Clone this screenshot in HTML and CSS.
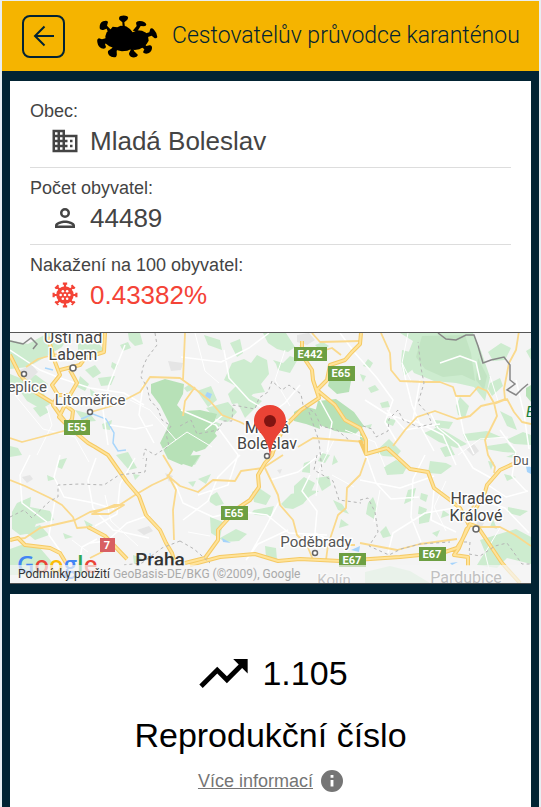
FILE: index.html
```html
<!DOCTYPE html>
<html lang="cs">
<head>
<meta charset="utf-8">
<meta name="viewport" content="width=device-width, initial-scale=1">
<title>Cestovatelův průvodce karanténou</title>
<link rel="stylesheet" href="styles.css">
</head>
<body>
<header class="topbar">
  <button class="back" type="button" aria-label="Zpět">
    <svg viewBox="0 0 24 24" width="24" height="24" fill="none" stroke="currentColor" stroke-width="2"><path d="M22 12H3M12.500 2.500L3 12l9.500 9.500"/></svg>
  </button>
  <svg class="logo" viewBox="12 15 186 135" width="62" height="45" aria-hidden="true">
    <path d="M40 82l4-12 12-9 6-8 14 2 10-5 16 2 12 8 8 10 14-6 14 1 12 6 6 10 2 14-6 10-8 8-14 8-14 2-10-3-12 5-16 2-14-3-12-8-12-4-10-8z"/>
    <path d="M92 55l-1-15-9-8q-3-8 4-11 10-4 20 1 5 4 0 10l-9 8 2 15zM50 75l-6-16-10 4q-10 1-11-5-1-16 10-21 12-5 15 2l-3 11 19 20zM46 86l-16 5q-5-2-9-3-7 2-5 12 2 13 12 18 12 3 14-4l-3-9 18-10zM64 103l-3 14-13 9q-2 7 3 13 9 8 21 5 4-5 2-18l9-20zM110 108l6 15-5 10q0 9 10 12 14 2 17-7l-12-12-3-16zM135 103l22 18-4 9q5 6 16 3 12-6 11-19-2-7-8-5l-9 2-16-18zM152 76l20-6 3-11q5-3 11 3 9 9 10 22-2 5-9 3l-8-7-18 6zM122 65l12-14-2-10q3-6 12-5 15 1 19 10 0 6-7 6l-10-1-10 16z"/>
  </svg>
  <h1 class="title">Cestovatelův průvodce karanténou</h1>
</header>
<main class="page">
  <section class="card place">
    <dl class="facts">
      <div class="fact">
        <dt>Obec:</dt>
        <dd><svg class="fact-icon" viewBox="0 0 24 24" fill="currentColor"><path d="M12 7V3H2v18h20V7H12zM6 19H4v-2h2v2zm0-4H4v-2h2v2zm0-4H4V9h2v2zm0-4H4V5h2v2zm4 12H8v-2h2v2zm0-4H8v-2h2v2zm0-4H8V9h2v2zm0-4H8V5h2v2zm10 12h-8v-2h2v-2h-2v-2h2v-2h-2V9h8v10zm-2-8h-2v2h2v-2zm0 4h-2v2h2v-2z"/></svg>Mladá Boleslav</dd>
      </div>
      <div class="fact">
        <dt>Počet obyvatel:</dt>
        <dd><svg class="fact-icon" viewBox="0 0 24 24" fill="currentColor"><path d="M12 6a2 2 0 110 4 2 2 0 010-4m0 10c2.700 0 5.800 1.300 6 2H6c.2-.7 3.300-2 6-2m0-12a4 4 0 100 8 4 4 0 000-8zm0 10c-2.700 0-8 1.300-8 4v2h16v-2c0-2.700-5.300-4-8-4z"/></svg>44489</dd>
      </div>
      <div class="fact infected">
        <dt>Nakažení na 100 obyvatel:</dt>
        <dd><svg class="fact-icon" viewBox="0 0 24 24">
          <g fill="none" stroke="currentColor" stroke-width="2"><path d="M12 1v22M1 12h22M4.200 4.200l15.600 15.600M19.800 4.200L4.200 19.800M10 1.500h4M10 22.500h4M1.500 10v4M22.500 10v4M3 6l3-3M18 3l3 3M3 18l3 3M18 21l3-3"/></g>
          <circle cx="12" cy="12" r="8" fill="currentColor"/>
          <g fill="#fff"><circle cx="10" cy="8.500" r="1.200"/><circle cx="14" cy="8.500" r="1.200"/><circle cx="8" cy="12" r="1.200"/><circle cx="12" cy="12" r="1.200"/><circle cx="16" cy="12" r="1.200"/><circle cx="10" cy="15.500" r="1.200"/><circle cx="14" cy="15.500" r="1.200"/></g>
        </svg>0.43382%</dd>
      </div>
    </dl>
    <div class="map">
      <svg class="map-canvas" viewBox="10 333 521 250" preserveAspectRatio="xMidYMid slice" role="img" aria-label="Mapa okolí Mladé Boleslavi">
        <rect x="10" y="333" width="521" height="250" fill="#f4f4f4"/>
        <g fill="#cdeccf">
          <path d="M10 340l18 4 20-11h22l-8 14-20 12-14 8-18 2zM10 374l10 4 16-3 12 9-4 10 6 10-9 5-14-8-7-10-10-5zM78 343l18-3 8 10-12 5-14-4zM85 370l10-5 6 8-8 5zM98 378l17-2-4 9-10 1zM80 376l9 8-4 7-8-4zM112 362l6 3-3 6-4-4zM102 424l10-4-2 10-7-1zM90 389l6 4-5 4zM120 345l8-3 3 6-8 3zM128 333h12l3 11-8 2-6-6zM33 408l10-4 6 8-9 5zM10 446l8 2 4 7-12 2zM75 410l15 4 6 7-12 1z"/>
          <path d="M204 335l16 5 2 10-14-5zM230 343l10-4 3 14-6 4zM263 333h23l9 14-7 5-11-3-9-6zM273 360l10 3 7-7 8 3-8 14-12-3-2-6zM232 363l12-4 7 4 6-8 10 5 2 14-8 10 4 8-12 2-7 8-14 2-4-10 8-8-12-6zM197 391l14-5 6 14-9 7zM206 408l22-6 9 10-9 10-12-3zM237 402l13-7 12 6-9 9-8 8zM184 388l6-4 4 5-7 3zM315 345l8-3 6 4-8 5zM211 420l10 4-7 10-7-3z"/>
          <path d="M400 333h73l8 18 9 26-5 24-11-14-18-4-22-2-20-8-8-14 7-18zM402 350l8 2 2 18-8 6-3-12zM488 352l13-9 10 5-6 12-12 1zM490 383l10-5 3 8-11 10-4-7zM363 366l5-7 5 4-3 5zM360 374l6 2-3 6zM368 388l7-3 4 5-8 3zM380 403l8-2 2 6-8 1zM456 406l4-9 9 9-4 12-7-3zM435 420l18 2-4 7-14-2zM424 433l14-6 14 8 15 9-10 4-18-6zM463 434l24-3 14 6-20 3-15 1zM487 446l20-3 10 10-14-1-17-3zM506 440l17-8 8 3v10l-17-1zM500 411l12 6 5 13-10-4zM386 418l10 2-3 6-7-3zM375 452l14-13 12 12-5 6-13-1zM440 448l10-3 5 10-10 2zM364 426l8-2-2 5zM526 351l5-3v12z"/>
          <path d="M17 503l14-6-1 10 20 4 4 9-18 4-4 9-12 2-8-6v-17zM24 531l16-6 9 10-14 5zM10 549l14-5 16 4 12 14-12 13H10zM59 460l8-2-5 11-5-2zM47 475l9 4-8 2zM116 455l12-3 9 16-8 2zM84 520l9 5-5 5zM133 474l7 1-5 5zM63 533l10 4-8 2zM133 555l9 3-8 6z"/>
          <path d="M181 455h20l-6 10-14-4zM209 497l8-5 7 12-8 2-6-4zM252 492l7-4 12 8-5 9-12-3zM254 510l20-4-3 10-15-1-5-2zM210 517l13 5-3 16 16-9 11 5-8 7-14 1-14-9zM198 479l13-5-5 10zM188 482l8-1-3 6zM265 546l11 2 1 12-11-3zM281 504l10-10 16-4 12 1-10 6-6 7-10 5-8-1zM294 486l10-9 11 6-5 11-16 1zM304 463l6-2v12l-8-1zM322 453l8 2-5 8-7-2zM316 478l13-2 2 9-9 6zM333 500l9 4 7 10-11-4zM341 519l8 6-10 3zM334 455l4 7-6 3z"/>
          <path d="M384 467l12-7 12 5-5 9-16 1zM430 461l16 2 6 3-11 8-13-1zM408 490l8-2-3 12-9 4zM421 493l7 2-2 7-6-3zM419 506l8 3-2 6-7-1zM419 516l12-4-2 10-10 2zM368 503l5-6 4 10-3 12-8-5zM380 532l6-6 5 10-8 2zM443 510l7 5-9 3zM432 533l8-3-3 7zM480 540l16-5 20-6 15 8v27l-24-6-10 10-20-3 8-13zM508 507l20 4-8 5-12-3zM493 519l4 10-7-2zM488 461l6 1-3 8zM506 457l10-4 5 5zM504 474l12 3-9 4zM365 572l25-6 20 5 20 12h-65z"/>
        </g>
        <g fill="#b7e1b7">
          <path d="M151 384l14-5 19 5-1 10-6 11 7 8 17 4 10-2 6 15-7 10-12 3-7 12-9 10-14-6-8-16 6-12 3-8-9-18-9-12zM184 411l16-1 17 4-5 15 5 7-12 13-9 3-12-8zM294 412l10-6 14 4 2 19-14-5-12-3zM318 401l18-2 18 13 10 14-9 8-20-3-15-6-5-12zM330 377l9-3 12 7-2 11-12 2-9-8zM360 433l5 2-1 7-4-3zM526 388l5-3v17l-5-6zM183 457l17-2-8 12-9-3z"/>
        </g>
        <g fill="#c2e4c3"><path d="M422 336l43-1 6 18 4 28-13-6-19 2-18-8-9-12zM478 358l9 18-3 14-8-10z"/></g>
        <g fill="#e5e5e5"><path d="M20 370l12-5 6 7-8 8-10-2zM297 335l12-2 6 7-8 5-10-3zM165 473l8 3-4 6zM22 477l8-2 3 4-6 4zM137 530l12-4 4 5-9 4zM466 449l8-5 5 7-6 5zM168 361l15 2-2 7-10 1zM476 520l8 3-5 9zM277 470l5-1-2 5z"/></g>
        <g fill="#a5d3fb"><path d="M207 392l5 2-2 5-5-3zM222 538l9 5-8-1zM526 466l5 1v7l-4-2zM351 550l9-4-1 6zM450 563l8-1-6 3z"/></g>
        <g fill="none" stroke="#a9d6fb" stroke-width="1.500"><path d="M45 368l8 2M81 419l12-5 13 5 8 14-1 10 5 8 8-1M150 553l1 8"/></g>
        <g fill="none" stroke="#fff" stroke-width="1.500" stroke-linejoin="round">
          <path d="M10 350l30 20 20 8 30 10 34 5 20 12M125 345l-16 40-6 25 5 35M110 425l25 4 18-4M143 385l-4 30 15 28M181 357l40 5 28-14 20-15M224 350l5 28 20 22 20 12M181 410l35 15 22 30-10 30-30 10M205 430l18-15M300 385l-15 18-25 18M320 400l12 22-5 30M340 333l15 20 22 25 16 22-8 22 12 20M365 400l22 14 28 9M402 363l4 18 6 24 10 24 12 22M440 363l20-7 16 6 4 18M420 380l-7 40 30 15 13 30M456 396l8 38 10 20M387 410l18 20 35-6M430 412l8 16 20 16 15 24 18 10M425 455l-12 24-2 38 10 25M366 455l10 28 15 16 28-2M360 480l40 8 34-12M434 490l-3 30 25 12M460 507l-35 6-32 20-5 20M500 430l16 22-4 24 15 16M480 500l25 8 24 25M516 380l8 34 5 35M488 485l18 12 22-6M60 455l-6 22 10 20 30 6 20 6M30 455l-10 20 2 28 25 19M96 458l-8 22 5 28 20 22 36 8M135 458l-15 26-3 30-22 12M55 500l-6 35 14 20M97 539l-15 8-3 16M150 515l-23 8-20 18-17 2M175 483l8 20 30 14 24-6 30 4 22 18 38 2M240 455l-22 22-10 24-25 19M270 480l28-8 25-20M280 500l-15 28-17 30M310 475l-8 16 15 20-2 22 20 10M288 530l-30 14-12 16"/>
        </g>
        <g fill="none" stroke="#fff" stroke-linejoin="round"><path d="M15 395l28 34 32 8 14 25M37 455l15-30-5-18M130 400l20 10 26 30M162 450l25-18 25 15M195 333l10 38 14 12M285 350l-10 30 15 26M334 440l-15 30-3 26M345 430l30 12 10 25M408 333l-6 30 10 20M490 376l8 25M458 455l22-16 28-2M500 528l-15 25 5 20M105 495l6 26 27 25M72 540l16 12M188 532l22 4M332 475l22 12M380 490l-6 32M446 481l-12 26 12 24"/></g>
        <g fill="none" stroke="#fad98c" stroke-width="1.800" stroke-linejoin="round">
          <path d="M91 412l24-7 25-13 10-15 30 1 14 10 16 13 12 14 18 7 18 9M10 438l12 4 53-14 13-9M185 333l-2 47M195 387l-10 14-2 15M26 367l12-8 22-6M381 333l9 20 1 17 9 11 25 1 15 0 13 5 3 9h14l8-9 9 4 7 12 11-4-1-10 5-26 7-13 3-19M393 446l12-16 12-13 18-6 22 8 13-3 11-10 13-3 3 13-12 24 3 15 7 12-1 6M494 404l13-5 7 13 8 10 9 2M298 447l15-9 53 4M180 486l18 6 15-12 22 1 6-10 22-3 20-13M265 468l13 27 2 10 13 15 4 15 10 10 6 15M326 560l2-15 10-30 8-7 1-20 13-13 6-17M360 543l37 7 23-6 37-5M475 527l25 0 15 8 16 11M10 480l15 6 25 12 12 7 11 12 4 11 13-1M10 540l15-2 15-10 35-8 15-8 28-6 17-11 17-10 15-7 5-8-9-15M167 475l13 11M174 540l-1-30 3-20-7-13M92 514l22-9 10 0-15 9zM300 345l12 9 20-6 9 7M312 333l8 9 40-1M90 558l14-7 8 0M467 525v-12l7-8M340 545l15 0"/>
        </g>
        <path id="motorways" class="road-edge" d="M48 337l7 25 5 13-8 10 6 10-5 10 7 10 8 10 7 7 13 11 7 4 13 8 19 27 12 14 7 19 14 15 6 13 6 10 2 7M60 370l20-5 5-7 19-6 1-19M70 370l7 13-7 12-14 0M65 405l8 6-1 8-5 6-8-8zM10 355l10 20 15 17 18 11M185 563l20-5 13-18v-10l20-22 12-8 9-13-1-12 7-12 7-8 5-15 12-18 12-12 18-12-6-18-1-10-10-15v-14M317 390l10-10 3-15 15-5 7-8 8-8 1-11M317 390l18 15 10 15 15 8 6 12v14l21-6M366 454l-6-14M387 448l10 9 13 12 18 3 6 16 16 12 10 8 8 15M190 565l30-8 35-3 23 7 22-2 40 2 60-4 20-2 25-3 12-4 5-8 8-16 8 3 12 18 12 18 18 20M467 528l-8 20-5 7 14 2 0 9M474 512l11-20 2-7 13-15 15-7 5-3M88 527l17 9 22 23M10 540l8-2 7 7 25 3 10 5 6 10"/>
        <path class="road-core" d="M48 337l7 25 5 13-8 10 6 10-5 10 7 10 8 10 7 7 13 11 7 4 13 8 19 27 12 14 7 19 14 15 6 13 6 10 2 7M60 370l20-5 5-7 19-6 1-19M70 370l7 13-7 12-14 0M65 405l8 6-1 8-5 6-8-8zM10 355l10 20 15 17 18 11M185 563l20-5 13-18v-10l20-22 12-8 9-13-1-12 7-12 7-8 5-15 12-18 12-12 18-12-6-18-1-10-10-15v-14M317 390l10-10 3-15 15-5 7-8 8-8 1-11M317 390l18 15 10 15 15 8 6 12v14l21-6M387 448l10 9 13 12 18 3 6 16 16 12 10 8 8 15M190 565l30-8 35-3 23 7 22-2 40 2 60-4 20-2 25-3 12-4 5-8 8-16 8 3 12 18 12 18 18 20M467 528l-8 20-5 7 14 2 0 9M474 512l11-20 2-7 13-15 15-7 5-3M88 527l17 9 22 23M10 540l8-2 7 7 25 3 10 5 6 10"/>
        <g fill="none" stroke="#b5b5b5" stroke-dasharray="3 3"><path d="M155 333l2 12-10 13-4 9-2 10 6 10 3 13 8 9 4 11 9 6-5 8 3 12-14 9-10-6-2 10M180 426l11-6 6 14 21-4 5-9 9 0 1-16 22 4 4-11 9-6 4-11 10 9 7-5 12 9 2 11 12 8 6 13 16 4 12 10M309 412l10 29 3 30M363 426l9 3 4 8 12-6 1-12 9-9 5 10 15 7 14-3-4-10-10-11 6-20-3-15-3-26M10 517l14-7 8 8 18-17 8-4 0-12 22-1 24 1 15-10 26-3 2-17M180 541l14 8 16 14M180 541l-18 7-20 15-18 2M317 455l-3 15 19 11 6 19 22 3M360 500l8-2 7 14 3 20-9 14 20 9 12-6 19-5 30-2M464 542l6 0-1 12 11 2 15-10 12-3 10 14 5 7h10"/></g>
        <g fill="none" stroke="#888" stroke-width="1.500"><path d="M10 341l13 3 8-6 6 6-4 5M438 333l8 6 10 1 10-5h8l4 11 5 17 8-3 13-3 6 8v15l5 4-8 6 9 5 6-6 6-5"/></g>
        <g class="stops"><circle cx="73" cy="368" r="3"/><circle cx="24" cy="374" r="2.500"/><circle cx="90" cy="412" r="2.500"/><circle cx="267" cy="456" r="2.500"/><circle cx="315" cy="553" r="2.500"/><circle cx="476" cy="529" r="3"/></g>
        <g class="towns">
          <text x="73" y="343">Ústí nad</text><text x="73" y="360">Labem</text>
          <text x="267" y="433">Mladá</text><text x="267" y="449">Boleslav</text>
          <text x="476" y="504">Hradec</text><text x="476" y="521">Králové</text>
          <text x="466" y="583">Pardubice</text>
        </g>
        <g class="towns small">
          <text x="23" y="392">Teplice</text><text x="90" y="405">Litoměřice</text><text x="316" y="547">Poděbrady</text><text x="334" y="585">Kolín</text><text x="513" y="465" class="from-start">Du</text>
        </g>
        <text class="capital" x="160" y="566">Praha</text>
        <text class="park" x="526" y="417">B</text>
        <g fill="#6d9f42"><path d="M64 420h26v15H64zM294 347h33v14h-33zM328 366h27v15h-27zM221 506h27v14h-27zM339 553h27v14h-27zM419 547h27v14h-27z"/></g>
        <path d="M100 538h15v14h-15z" fill="#d85f62"/>
        <g class="shields"><text x="77" y="431">E55</text><text x="310" y="358">E442</text><text x="341" y="377">E65</text><text x="234" y="517">E65</text><text x="352" y="564">E67</text><text x="432" y="558">E67</text><text x="107" y="549">7</text></g>
        <path d="M270 457c-1-12-5-19-11-26-3-4-5-6-5-10 0-9 7-16 16-16s16 7 16 16c0 4-2 6-5 10-6 7-10 14-11 26z" fill="#ea4335"/><circle cx="270" cy="421" r="6" fill="#811411"/>
        <text class="wordmark" x="17" y="573"><tspan fill="#4285f4">G</tspan><tspan fill="#ea4335">o</tspan><tspan fill="#fbbc05">o</tspan><tspan fill="#4285f4">g</tspan><tspan fill="#34a853">l</tspan><tspan fill="#ea4335">e</tspan></text>
      </svg>
      <div class="credits"><a href="#podminky">Podmínky použití</a> <span>GeoBasis-DE/BKG (©2009), Google</span></div>
    </div>
  </section>
  <section class="card indicator">
    <p class="number"><svg class="trend" viewBox="2 6 20 12" fill="currentColor"><path d="M16 6l2.290 2.290-4.880 4.880-4-4L2 16.590 3.410 18l6-6 4 4 6.300-6.290L22 12V6z"/></svg>1.105</p>
    <h2 class="caption">Reprodukční číslo</h2>
    <p class="more"><a href="#informace">Více informací</a><svg class="info" viewBox="2 2 20 20" fill="currentColor"><path d="M12 2a10 10 0 100 20 10 10 0 000-20zm1.300 15h-2.600v-6h2.600zm0-8h-2.600V6.500h2.600z"/></svg></p>
  </section>
</main>
</body>
</html>
```
FILE: styles.css
```css
* { box-sizing: border-box; }

body {
  margin: 0;
  padding: 1px 2px 0;
  min-height: 100vh;
  display: flex;
  flex-direction: column;
  background: #e8eef2;
  color: #444;
  font-family: "Liberation Sans", Arial, sans-serif;
}

.topbar {
  display: flex;
  align-items: center;
  height: 70px;
  padding: 0 20px;
  background: #f5b400;
  color: #022333;
}

.back {
  display: grid;
  place-items: center;
  flex: none;
  width: 43px;
  height: 43px;
  padding: 0;
  border: 2px solid #022333;
  border-radius: 8px;
  background: none;
  color: inherit;
}

.logo {
  flex: none;
  margin: 0 14px 0 31px;
  fill: #000;
}

.title {
  margin: 0;
  font: 300 23px/32px Roboto, sans-serif;
  white-space: nowrap;
}

.page {
  flex: 1;
  display: flex;
  flex-direction: column;
  gap: 10px;
  padding: 10px 8px 0;
  background: #022333;
}

.card { background: #fff; }

.facts {
  margin: 0;
  padding: 10px 20px;
}

.fact {
  padding: 10px 0 6px;
  border-bottom: 1px solid #ddd;
}

.fact:last-child { border-bottom-color: transparent; }

.fact dt {
  font-size: 18px;
  line-height: 20px;
}

.fact dd {
  display: flex;
  align-items: center;
  gap: 10px;
  margin: 0;
  padding-left: 20px;
  font-size: 26px;
  line-height: 40px;
}

.fact-icon {
  width: 30px;
  height: 30px;
}

.infected dd { color: #f44336; }

.infected .fact-icon { padding: 2px; }

.map {
  position: relative;
  border-top: 1px solid #555;
  border-bottom: 1px solid #555;
}

.map-canvas {
  display: block;
  width: 100%;
  height: 250px;
}

.road-edge,
.road-core {
  fill: none;
  stroke: #f5ca65;
  stroke-width: 4px;
  stroke-linejoin: round;
}

.road-core {
  stroke: #ffe399;
  stroke-width: 2px;
}

.stops {
  fill: #fff;
  stroke: #666;
  stroke-width: 1.5px;
}

.map text {
  font-family: Roboto, sans-serif;
  text-anchor: middle;
}

.towns {
  font-size: 16px;
  fill: #444;
  stroke: #fff;
  stroke-width: 3px;
  stroke-linejoin: round;
  paint-order: stroke;
}

.towns.small {
  font-size: 15px;
  fill: #555;
}

.map .from-start {
  font-size: 13px;
  text-anchor: start;
}

.map .capital {
  font-size: 19px;
  font-weight: 500;
  fill: #333;
}

.map .park {
  font-size: 15px;
  font-style: italic;
  fill: #188038;
  text-anchor: start;
}

.shields {
  font-size: 11px;
  font-weight: 700;
  fill: #fff;
}

.map .wordmark {
  font-family: "Open Sans", sans-serif;
  font-size: 24px;
  font-weight: 600;
  text-anchor: start;
}

.credits {
  position: absolute;
  right: 0;
  bottom: 0;
  left: 0;
  padding: 0 8px;
  background: rgba(245, 245, 245, 0.7);
  color: #aaa;
  font: 12px/18px Roboto, sans-serif;
  white-space: nowrap;
}

.credits a {
  color: #333;
  text-decoration: none;
}

.indicator {
  flex: 1;
  padding-top: 55px;
  text-align: center;
  color: #000;
}

.number,
.caption {
  margin: 0;
  font-size: 34px;
  font-weight: 400;
}

.number {
  display: flex;
  align-items: center;
  justify-content: center;
  gap: 14px;
  padding-left: 6px;
  line-height: 48px;
}

.trend {
  width: 49px;
  height: 29px;
}

.caption {
  margin-top: 16px;
  line-height: 44px;
}

.more {
  display: flex;
  align-items: center;
  justify-content: center;
  gap: 8px;
  margin: 12px 0;
  color: #757575;
  font-size: 18px;
  line-height: 24px;
}

.more a { color: inherit; }

.info {
  width: 22px;
  height: 22px;
}
```
